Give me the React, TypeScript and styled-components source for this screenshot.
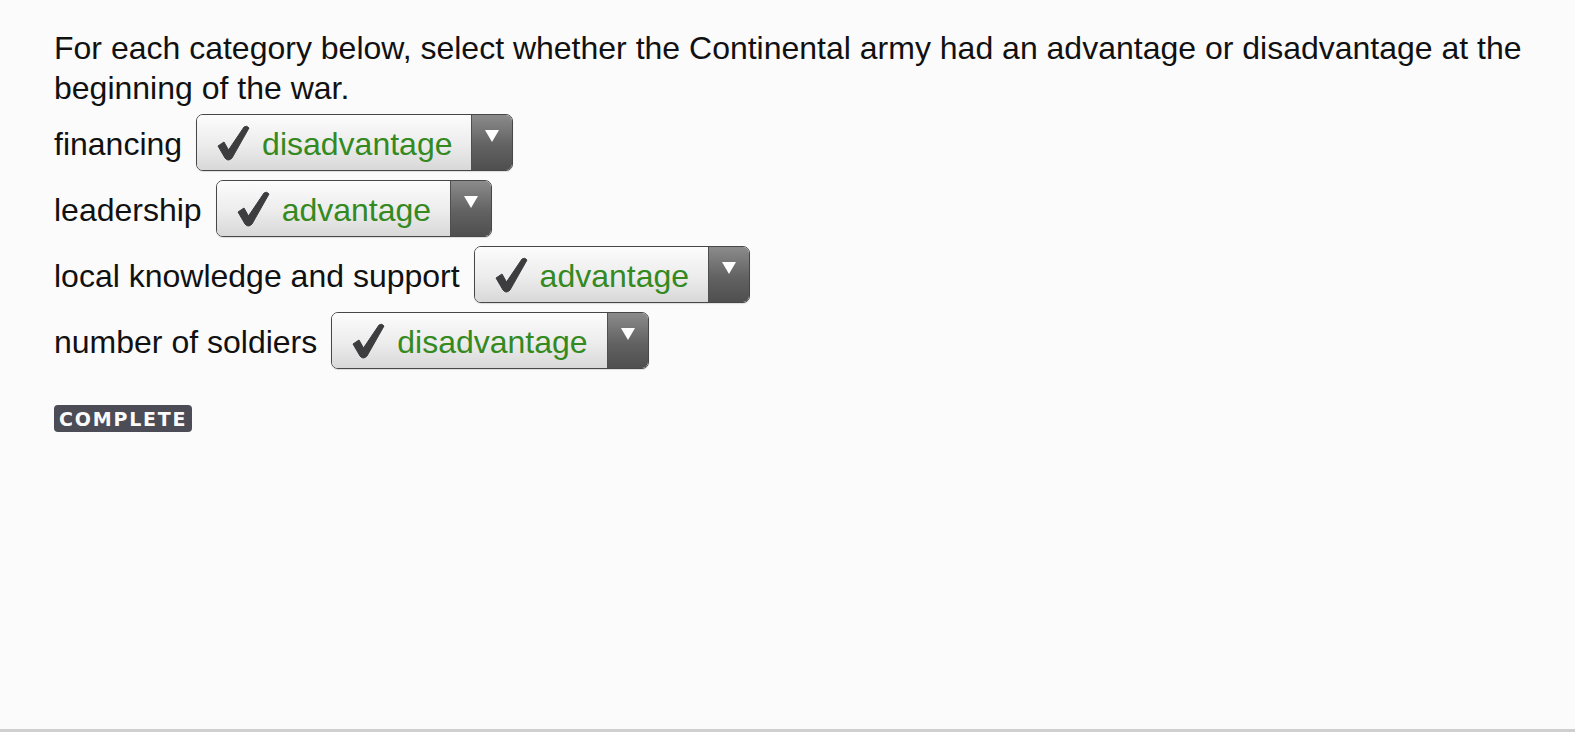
import styled, { createGlobalStyle } from 'styled-components';

const GlobalStyle = createGlobalStyle`
    html, body {
        margin: 0;
        padding: 0;
        background: #fbfbfb;
    }
    body {
        font-family: "Liberation Sans", Arial, sans-serif;
        color: #111;
    }
`

const Page = styled.div`
    box-sizing: border-box;
    height: 732px;
    padding: 28px 30px 0 54px;
    border-bottom: 3px solid #cfcfcf;
    display: flex;
    flex-direction: column;
`

const Prompt = styled.p`
    margin: 0 0 6px;
    font-size: 32px;
    line-height: 40px;
`

const Rows = styled.div`
    display: flex;
    flex-direction: column;
    gap: 9px;
`

const Row = styled.div`
    display: flex;
    align-items: center;
    gap: 14px;
    height: 57px;
`

const Label = styled.span`
    font-size: 32px;
    padding-top: 4px;
`

const Select = styled.div`
    box-sizing: border-box;
    height: 57px;
    display: flex;
    border: 1.5px solid #474747;
    border-radius: 7px;
    overflow: hidden;
    box-shadow: 0 1px 1px rgba(0, 0, 0, 0.12);
`

const Choice = styled.div`
    display: flex;
    align-items: center;
    gap: 12px;
    padding: 0 19px 0 19px;
    background: linear-gradient(#fcfcfc, #ececec 55%, #d8d8d8);
`

const Chosen = styled.span`
    color: #34891f;
    font-size: 32px;
    padding-top: 3px;
`

const Arrow = styled.div`
    width: 41px;
    display: flex;
    justify-content: center;
    padding-top: 15px;
    box-sizing: border-box;
    border-left: 1px solid #4f4f4f;
    background: linear-gradient(#8b8b8b, #626262 55%, #4f4f4f);
`

const Complete = styled.span`
    align-self: flex-start;
    margin-top: 36px;
    padding: 3px 5px 2px 5px;
    border-radius: 4px;
    background: #4c4c56;
    color: #fbfbfb;
    font-family: "DejaVu Sans", sans-serif;
    font-weight: bold;
    font-size: 19px;
    letter-spacing: 1.8px;
    line-height: 22px;
`

function Check() {
    return (
        <svg width="34" height="36" viewBox="0 0 34 36">
            <path d="M2 21 L8 17 L12.5 25 L28 2 Q31 0 33 3 L16 33 Q12 37 9 33 Z"
                  fill="#3d3d3f" stroke="#3d3d3f" strokeWidth="1" strokeLinejoin="round"/>
        </svg>
    )
}

function Triangle() {
    return (
        <svg width="14" height="12" viewBox="0 0 14 12">
            <path d="M0 0 H14 L7 12 Z" fill="#fff"/>
        </svg>
    )
}

const answers = [
    {label: 'financing', value: 'disadvantage'},
    {label: 'leadership', value: 'advantage'},
    {label: 'local knowledge and support', value: 'advantage'},
    {label: 'number of soldiers', value: 'disadvantage'},
]

export default function App() {
    return (
        <Page>
            <GlobalStyle/>
            <Prompt>
                For each category below, select whether the Continental army had an advantage or disadvantage at the
                beginning of the war.
            </Prompt>
            <Rows>
                {answers.map(a => (
                    <Row key={a.label}>
                        <Label>{a.label}</Label>
                        <Select>
                            <Choice>
                                <Check/>
                                <Chosen>{a.value}</Chosen>
                            </Choice>
                            <Arrow><Triangle/></Arrow>
                        </Select>
                    </Row>
                ))}
            </Rows>
            <Complete>COMPLETE</Complete>
        </Page>
    )
}
